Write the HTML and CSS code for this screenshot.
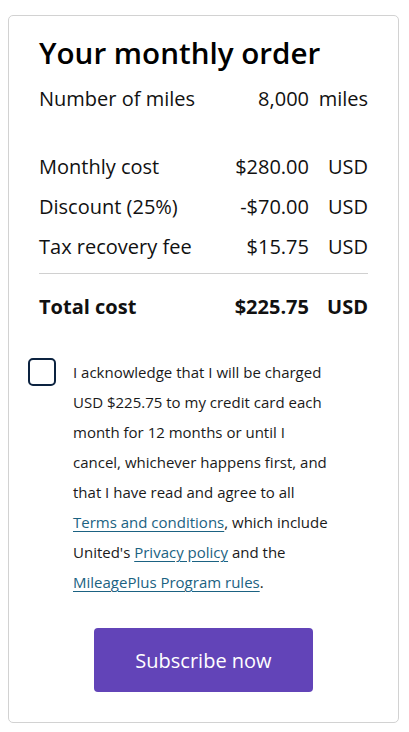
FILE: index.html
```html
<!DOCTYPE html>
<html lang="en">
<head>
<meta charset="utf-8">
<title>Your monthly order</title>
<link rel="stylesheet" href="styles.css">
</head>
<body>
<div class="card">
  <h1 class="title">Your monthly order</h1>
  <div class="row miles">
    <span class="label">Number of miles</span>
    <span class="value">8,000</span>
    <span class="unit">miles</span>
  </div>
  <div class="costs">
    <div class="row">
      <span class="label">Monthly cost</span>
      <span class="value">$280.00</span>
      <span class="unit">USD</span>
    </div>
    <div class="row">
      <span class="label">Discount (25%)</span>
      <span class="value">-$70.00</span>
      <span class="unit">USD</span>
    </div>
    <div class="row">
      <span class="label">Tax recovery fee</span>
      <span class="value">$15.75</span>
      <span class="unit">USD</span>
    </div>
  </div>
  <div class="row total">
    <span class="label">Total cost</span>
    <span class="value">$225.75</span>
    <span class="unit">USD</span>
  </div>
  <div class="consent">
    <span class="checkbox"></span>
    <p class="consent-text">I acknowledge that I will be charged USD $225.75 to my credit card each month for 12 months or until I cancel, whichever happens first, and that I have read and agree to all <a href="#">Terms and conditions</a>, which include United's <a href="#">Privacy policy</a> and the <a href="#">MileagePlus Program rules</a>.</p>
  </div>
  <div class="actions">
    <button class="subscribe" type="button">Subscribe now</button>
  </div>
</div>
</body>
</html>
```
FILE: styles.css
```css
html, body {
  margin: 0;
  padding: 0;
  background: #fff;
}
body {
  font-family: "Open Sans", "Noto Sans", sans-serif;
  color: #111;
}
.card {
  box-sizing: border-box;
  margin: 15px 10px 9px 8px;
  border: 1px solid #d2d2d2;
  border-radius: 5px;
  padding: 19px 30px 30px 30px;
  height: 708px;
}
.title {
  margin: 0;
  font-size: 29.6px;
  font-weight: 600;
  line-height: 36px;
  color: #000;
}
.row {
  display: grid;
  grid-template-columns: 1fr auto 59px;
  align-items: baseline;
  font-size: 20px;
  line-height: 40px;
}
.value {
  text-align: right;
}
.unit {
  text-align: right;
}
.miles {
  margin-top: 8px;
}
.costs {
  margin-top: 28px;
  padding-bottom: 6px;
  border-bottom: 1px solid #d0d0d0;
}
.total {
  font-weight: 700;
  margin-top: 13px;
}
.consent {
  display: flex;
  gap: 17px;
  margin: 30px -5px 0 -11px;
}
.checkbox {
  flex: none;
  box-sizing: border-box;
  width: 28px;
  height: 28px;
  margin-top: 1px;
  border: 2px solid #0c2340;
  border-radius: 5px;
}
.consent-text {
  margin: 0;
  font-size: 15px;
  line-height: 30px;
  color: #1a1a1a;
  width: 262px;
}
.consent-text a {
  color: #1b6282;
  text-decoration: underline;
  text-underline-offset: 3px;
}
.actions {
  display: flex;
  justify-content: center;
  margin-top: 31px;
}
.subscribe {
  width: 219px;
  height: 64px;
  border: none;
  border-radius: 4px;
  background: #6244b8;
  color: #fff;
  font-family: "Open Sans", "Noto Sans", sans-serif;
  font-size: 20px;
}
```
